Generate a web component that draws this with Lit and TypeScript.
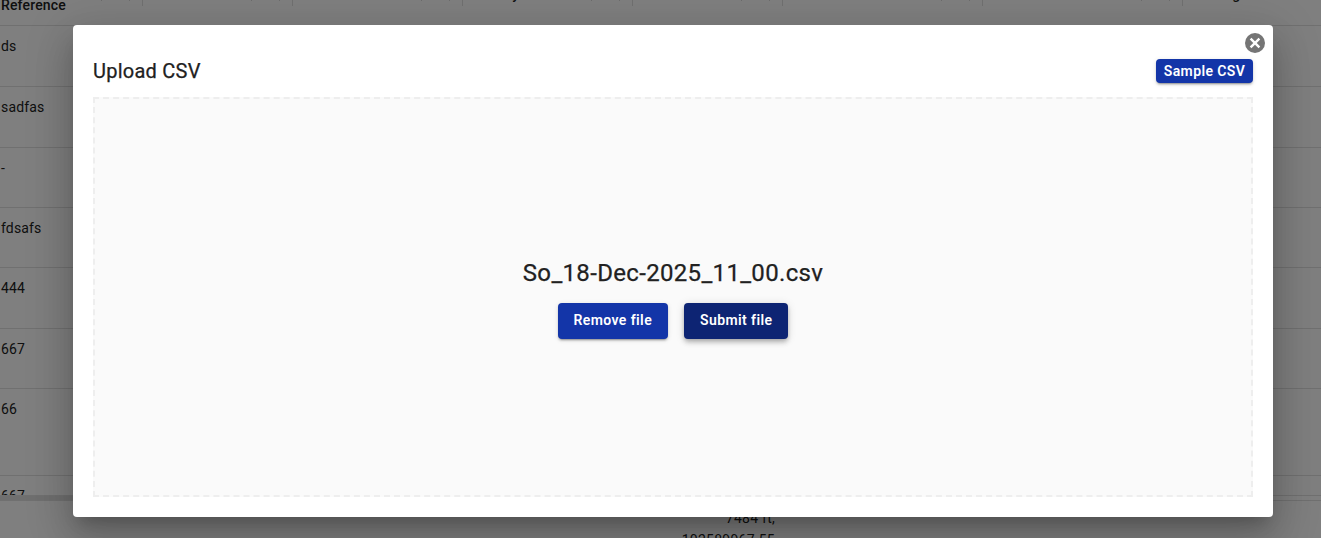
import { LitElement, html, css } from "lit";
import { customElement } from "lit/decorators.js";

const COLS = [
  { w: 143, label: "Reference", cls: "first" },
  { w: 150, label: "", cls: "" },
  { w: 170, label: "", cls: "" },
  { w: 170, label: "Delivery", cls: "high" },
  { w: 150, label: "", cls: "" },
  { w: 200, label: "", cls: "" },
  { w: 200, label: "", cls: "" },
  { w: 138, label: "Pending", cls: "high" },
];
const ROWS = [
  { h: 61, t: "ds" },
  { h: 61, t: "sadfas" },
  { h: 60, t: "-" },
  { h: 60, t: "fdsafs" },
  { h: 61, t: "444" },
  { h: 60, t: "667" },
  { h: 87, t: "66" },
  { h: 20, t: "667" },
];

@customElement("app-root")
export class AppRoot extends LitElement {
  static styles = css`
    :host {
      display: block;
      position: relative;
      width: 1321px;
      height: 538px;
      overflow: hidden;
      background: #fff;
      font-family: Roboto, "Liberation Sans", sans-serif;
      color: #212121;
    }
    .head {
      display: flex;
      height: 25px;
      border-bottom: 1px solid #e0e0e0;
      box-sizing: content-box;
    }
    .hcell {
      position: relative;
      box-sizing: border-box;
      padding-left: 2px;
      font-size: 14px;
      font-weight: 500;
      letter-spacing: 0.15px;
      height: 25px;
      overflow: hidden;
      white-space: nowrap;
      flex: none;
    }
    .hcell.first {
      padding-left: 1px;
    }
    .hcell span {
      display: block;
      line-height: 12px;
      margin-top: -1px;
    }
    .hcell.high {
      padding-left: 5px;
    }
    .hcell.high span {
      margin-top: -12px;
    }
    .divider {
      position: absolute;
      right: 0;
      top: 0;
      width: 1px;
      height: 6px;
      background: #e0e0e0;
    }
    .tick {
      position: absolute;
      top: 0;
      width: 1px;
      height: 1px;
      background: #d8d8d8;
    }
    .tick.near {
      right: 13px;
    }
    .tick.far {
      right: 41px;
    }
    .rows {
      display: flex;
      flex-direction: column;
    }
    .row {
      box-sizing: border-box;
      border-bottom: 1px solid #e0e0e0;
      padding: 10px 1px 0;
      font-size: 14px;
      line-height: 20px;
      letter-spacing: 0.15px;
      overflow: hidden;
      flex: none;
    }
    .scrollbar {
      height: 4px;
      width: 75px;
      background: #dedede;
    }
    .rule {
      height: 1px;
      background: #e0e0e0;
    }
    .stray {
      display: flex;
      flex-direction: column;
      align-items: flex-end;
      width: 775px;
      margin-top: 6px;
      font-size: 14px;
      line-height: 22px;
      letter-spacing: 0.25px;
    }
    .overlay {
      position: absolute;
      inset: 0;
      background: rgba(0, 0, 0, 0.5);
    }
    .modal {
      position: absolute;
      left: 73px;
      top: 25px;
      width: 1200px;
      height: 492px;
      box-sizing: border-box;
      padding: 30px 20px 20px;
      background: #fff;
      border-radius: 4px;
      display: flex;
      flex-direction: column;
      gap: 14px;
      box-shadow: 0 11px 15px -7px rgba(0, 0, 0, 0.2),
        0 24px 38px 3px rgba(0, 0, 0, 0.14),
        0 9px 46px 8px rgba(0, 0, 0, 0.12);
    }
    .close {
      position: absolute;
      top: 8px;
      right: 8px;
      width: 20px;
      height: 20px;
      border-radius: 50%;
      background: #757575;
      display: flex;
      align-items: center;
      justify-content: center;
    }
    .close svg {
      display: block;
    }
    .top {
      display: flex;
      align-items: flex-start;
      justify-content: space-between;
      height: 28px;
    }
    h2 {
      margin: 2px 0 0;
      font-size: 20px;
      font-weight: 400;
      line-height: 28px;
      letter-spacing: 0.25px;
      -webkit-text-stroke: 0.25px #212121;
      color: #212121;
    }
    .btn {
      border: 0;
      margin: 0;
      font-family: inherit;
      font-weight: 600;
      letter-spacing: 0.4px;
      color: #fff;
      background: #1335a8;
      border-radius: 4px;
      font-size: 14px;
      box-shadow: 0 3px 1px -2px rgba(0, 0, 0, 0.2),
        0 2px 2px 0 rgba(0, 0, 0, 0.14), 0 1px 5px 0 rgba(0, 0, 0, 0.12);
    }
    .sample {
      align-self: flex-end;
      height: 24px;
      width: 97px;
      padding: 0;
      line-height: 24px;
    }
    .drop {
      flex: 1;
      box-sizing: border-box;
      border: 2px dashed #eeeeee;
      background: #fafafa;
      display: flex;
      flex-direction: column;
      align-items: center;
      justify-content: center;
      gap: 12px;
    }
    .file {
      font-size: 24px;
      font-weight: 400;
      line-height: 36px;
      letter-spacing: 0.33px;
      -webkit-text-stroke: 0.25px #212121;
      color: #212121;
    }
    .actions {
      display: flex;
      gap: 16px;
    }
    .actions .btn {
      height: 36px;
      padding: 0 16px 2px;
    }
    .btn.hover {
      background: #0d2473;
      box-shadow: 0 2px 4px -1px rgba(0, 0, 0, 0.2),
        0 4px 5px 0 rgba(0, 0, 0, 0.14), 0 1px 10px 0 rgba(0, 0, 0, 0.12);
    }
  `;

  render() {
    return html`
      <div class="head">
        ${COLS.map(
          (c, i) => html`<div class="hcell ${c.cls}" style="width:${c.w}px">
            <span>${c.label}</span>
            ${i < 7
              ? html`<i class="tick near"></i><i class="tick far"></i>
                  <i class="divider"></i>`
              : ""}
          </div>`
        )}
      </div>
      <div class="rows">
        ${ROWS.map(
          (r) => html`<div class="row" style="height:${r.h}px">${r.t}</div>`
        )}
      </div>
      <div class="scrollbar"></div>
      <div class="rule"></div>
      <div class="stray"><span>7484 ft,</span><span>102589967.55</span></div>
      <div class="overlay"></div>
      <div class="modal">
        <div class="close">
          <svg width="14" height="14" viewBox="0 0 14 14" fill="none" stroke="#fff" stroke-width="2.4" stroke-linecap="butt">
            <path d="M2.6 2.6 11.4 11.4M11.4 2.6 2.6 11.4"></path>
          </svg>
        </div>
        <div class="top">
          <h2>Upload CSV</h2>
          <button class="btn sample">Sample CSV</button>
        </div>
        <div class="drop">
          <div class="file">So_18-Dec-2025_11_00.csv</div>
          <div class="actions">
            <button class="btn">Remove file</button>
            <button class="btn hover">Submit file</button>
          </div>
        </div>
      </div>
    `;
  }
}
